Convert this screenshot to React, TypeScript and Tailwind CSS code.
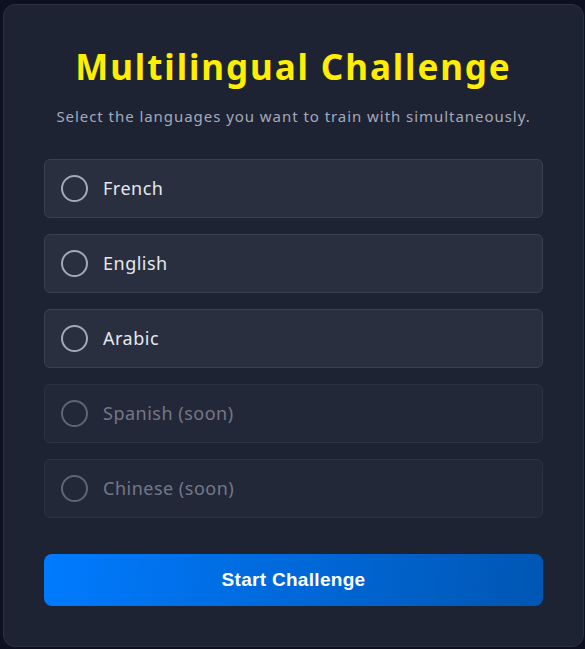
import { useState } from "react";

const languages = [
  { id: "fr", label: "French", soon: false },
  { id: "en", label: "English", soon: false },
  { id: "ar", label: "Arabic", soon: false },
  { id: "es", label: "Spanish (soon)", soon: true },
  { id: "zh", label: "Chinese (soon)", soon: true },
];

export default function App() {
  const [selected, setSelected] = useState<string[]>([]);

  const toggle = (id: string) =>
    setSelected((prev) =>
      prev.includes(id) ? prev.filter((x) => x !== id) : [...prev, id]
    );

  return (
    <div className="min-h-[649px] bg-[#0c1020] pt-[4px] pl-[3px] font-['Noto_Sans',sans-serif]">
      <div className="w-[581px] h-[643px] rounded-[12px] border border-[#2b3142] bg-[#1e2333] px-10 pt-[40px]">
        {/* header */}
        <h1 className="text-center text-[35px] leading-[44px] font-bold tracking-[1.9px] text-[#ffee00]">
          Multilingual Challenge
        </h1>
        <p className="mt-[16px] text-center text-[15px] leading-[22px] tracking-[0.95px] text-[#a3aabb]">
          Select the languages you want to train with simultaneously.
        </p>

        {/* language options */}
        <div className="mt-[32px] flex flex-col gap-[16px]">
          {languages.map((lang) => {
            const on = selected.includes(lang.id);
            return (
              <button
                key={lang.id}
                disabled={lang.soon}
                onClick={() => toggle(lang.id)}
                className={`flex h-[59px] items-center gap-[15px] rounded-[6px] border px-[16px] text-left ${
                  lang.soon
                    ? "border-[#2c3242] bg-[#232838] cursor-not-allowed"
                    : "border-[#3a4052] bg-[#2a2f3f]"
                }`}
              >
                <span
                  className={`h-[27px] w-[27px] shrink-0 rounded-full border-2 ${
                    lang.soon ? "border-[#5f6575]" : "border-[#a4a9b6]"
                  } ${on ? "bg-[#007bff]" : ""}`}
                />
                <span
                  className={`text-[18px] tracking-[0.5px] ${
                    lang.soon ? "text-[#737887]" : "text-[#e6e8ee]"
                  }`}
                >
                  {lang.label}
                </span>
              </button>
            );
          })}
        </div>

        <button className="mt-[36px] h-[52px] w-full rounded-[8px] bg-linear-[100deg] from-[#007bff] to-[#0056b3] text-[19px] tracking-[0.3px] font-bold text-white font-['Liberation_Sans',Arial,sans-serif]">
          Start Challenge
        </button>
      </div>
    </div>
  );
}
